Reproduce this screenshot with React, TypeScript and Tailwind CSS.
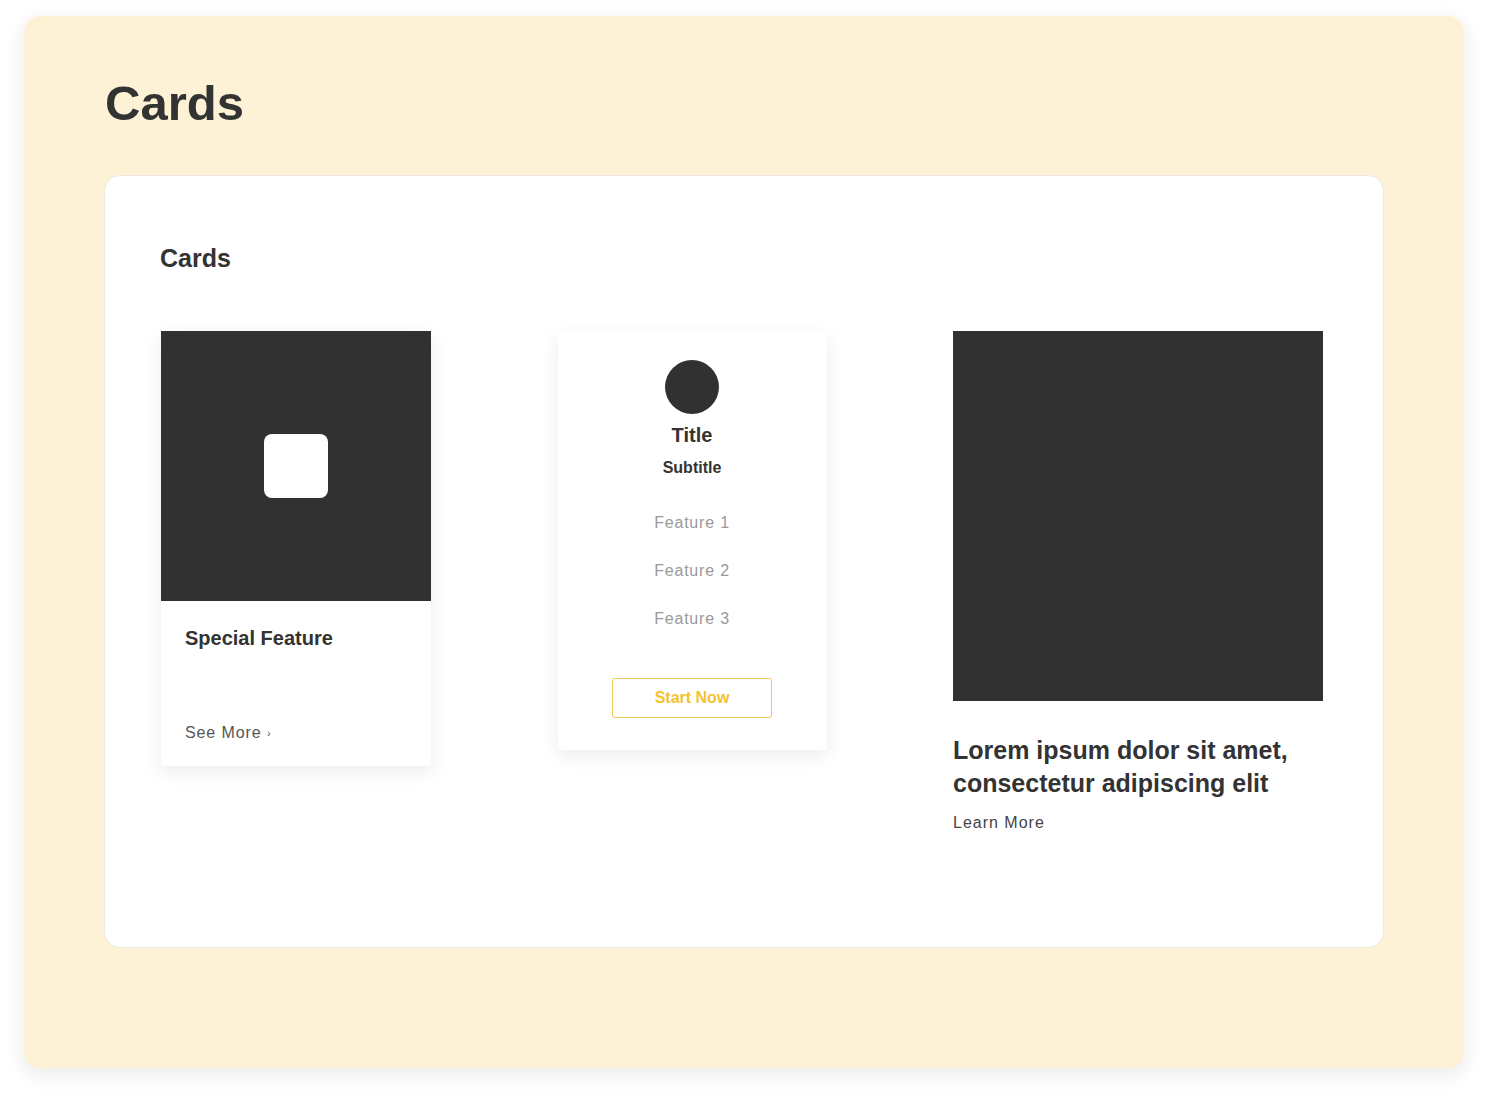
import React from "react";

const font = { fontFamily: '"Liberation Sans", Arial, Helvetica, sans-serif' };

function FeatureCard() {
  return (
    <div className="w-[270px] bg-white shadow-[0_6px_18px_rgba(0,0,0,0.08)]">
      <div className="h-[270px] bg-[#313131] flex items-center justify-center">
        <div className="w-16 h-16 rounded-lg bg-white" />
      </div>
      <div className="px-6 pt-[25px] pb-[21px]">
        <div className="text-[20px] leading-6 font-bold text-[#333]">Special Feature</div>
        <div className="mt-[71px] text-base leading-6 tracking-[0.9px] text-[#555]">
          See More <span className="text-[11px] align-[1px]">›</span>
        </div>
      </div>
    </div>
  );
}

function PricingCard() {
  const features = ["Feature 1", "Feature 2", "Feature 3"];
  return (
    <div className="w-[269px] bg-white shadow-[0_6px_18px_rgba(0,0,0,0.08)] flex flex-col items-center pt-[29px] pb-8">
      <div className="w-[54px] h-[54px] rounded-full bg-[#313131]" />
      <div className="mt-[7px] text-xl leading-7 font-bold text-[#333]">Title</div>
      <div className="mt-[7px] text-base leading-6 font-bold text-[#333]">Subtitle</div>
      <ul className="mt-[19px] flex flex-col items-center">
        {features.map((f) => (
          <li key={f} className="text-base leading-[48px] tracking-[0.8px] text-[#999]">
            {f}
          </li>
        ))}
      </ul>
      <button className="mt-[35px] w-[160px] h-10 rounded-[3px] border border-[#f1cb56] text-base font-bold text-[#f4c22f]">
        Start Now
      </button>
    </div>
  );
}

function ArticleCard() {
  return (
    <div className="w-[370px]">
      <div className="h-[370px] bg-[#313131]" />
      <div className="mt-[33px] text-[25px] leading-[33px] font-bold text-[#333]">
        Lorem ipsum dolor sit amet, consectetur adipiscing elit
      </div>
      <div className="mt-[11px] text-base leading-6 tracking-[1px] text-[#444]">Learn More</div>
    </div>
  );
}

export default function App() {
  return (
    <div className="min-h-screen bg-white pt-4 px-6 pb-[33px]" style={font}>
      <div className="h-[1052px] rounded-2xl bg-[#fdf2d6] shadow-[0_6px_22px_rgba(0,0,0,0.09)] px-[80px] pt-[63px]">
        <h1 className="ml-px text-[49px] leading-none font-bold text-[#333]">Cards</h1>
        <div className="mt-[47px] h-[773px] rounded-2xl bg-white border border-[#ece9e1] pl-[56px] pr-[60px] pt-[70px]">
          <h2 className="-ml-px text-[25px] leading-none font-bold text-[#333]">Cards</h2>
          <div className="mt-[60px] flex justify-between items-start">
            <FeatureCard />
            <PricingCard />
            <ArticleCard />
          </div>
        </div>
      </div>
    </div>
  );
}
